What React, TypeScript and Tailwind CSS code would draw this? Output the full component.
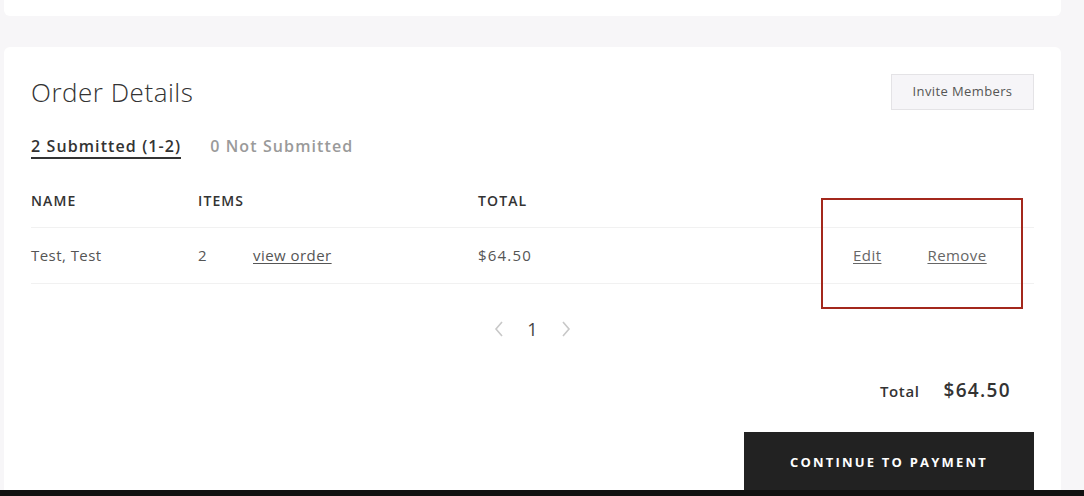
import React from "react";

const ff = { fontFamily: "'Open Sans', Lato, sans-serif" };

export default function App() {
  return (
    <div className="relative h-[496px] w-[1084px] overflow-hidden bg-[#f7f6f8] text-[#333]" style={ff}>
      <div className="flex w-[1061px] flex-col gap-[31px] pl-[4px]">
        <div className="h-[16px] rounded-b-[6px] bg-white" />
        <div className="rounded-t-[6px] bg-white px-[27px] pt-[25px] pb-[20px]">
          <div className="flex items-start justify-between">
            <h2 className="text-[26px] font-light leading-[40px] tracking-[0.02em] text-[#333]">Order Details</h2>
            <button className="mt-[2px] h-[36px] w-[143px] border border-[#e4e3e6] bg-[#f6f5f8] text-[13px] tracking-[0.03em] text-[#555]">
              Invite Members
            </button>
          </div>
          <div className="mt-[23px] flex gap-[29px] text-[16px] font-semibold leading-[22px] tracking-[1.1px]">
            <div className="border-b-2 border-[#333] text-[#333]">2 Submitted (1-2)</div>
            <div className="text-[#9a9a9a]">0 Not Submitted</div>
          </div>
          <div className="mt-[15px]">
            <div className="grid h-[54px] grid-cols-[167px_280px_375px_1fr] items-center border-b border-[#f1f1f1] text-[14px] font-semibold uppercase tracking-[0.08em] text-[#333]">
              <div>Name</div>
              <div>Items</div>
              <div>Total</div>
              <div />
            </div>
            <div className="grid h-[56px] grid-cols-[167px_280px_375px_1fr] items-center border-b border-[#f1f1f1] text-[15px] tracking-[0.03em] text-[#555]">
              <div>Test, Test</div>
              <div className="flex items-center">
                <span className="w-[55px]">2</span>
                <a className="underline underline-offset-2">view order</a>
              </div>
              <div className="tracking-[0.08em]">$64.50</div>
              <div className="flex gap-[46px] text-[#666]">
                <a className="underline underline-offset-2">Edit</a>
                <a className="underline underline-offset-2">Remove</a>
              </div>
            </div>
          </div>
          <div className="mt-[35px] flex h-[20px] items-center justify-center gap-[22px]">
            <svg width="12" height="18" viewBox="0 0 12 18" fill="none" stroke="#c8c8c8" strokeWidth="1.6">
              <path d="M9 2 L3 9 L9 16" />
            </svg>
            <span className="text-[18px] leading-[20px] text-[#444]">1</span>
            <svg width="12" height="18" viewBox="0 0 12 18" fill="none" stroke="#c8c8c8" strokeWidth="1.6">
              <path d="M3 2 L9 9 L3 16" />
            </svg>
          </div>
          <div className="mt-[37px] flex h-[24px] items-baseline justify-end gap-[24px] pr-[23px]">
            <span className="text-[15px] font-semibold tracking-[0.04em] text-[#333]">Total</span>
            <span className="text-[19px] font-semibold tracking-[0.07em] text-[#333]">$64.50</span>
          </div>
          <div className="mt-[32px] flex justify-end">
            <button className="h-[62px] w-[290px] bg-[#222] text-[13px] font-bold uppercase tracking-[0.17em] text-white">
              Continue to Payment
            </button>
          </div>
        </div>
      </div>
      <div className="absolute left-[821px] top-[198px] h-[111px] w-[202px] border-2 border-[#a3281c]" />
      <div className="absolute bottom-0 left-0 h-[6px] w-full bg-[#111]" />
    </div>
  );
}
